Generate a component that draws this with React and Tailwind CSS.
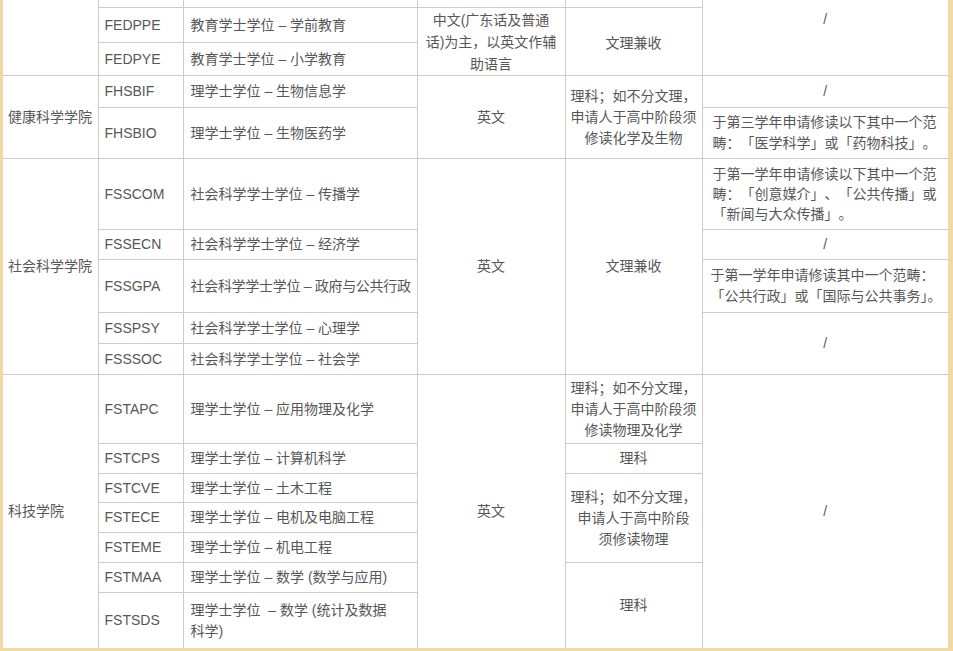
const td = "border border-[#cbcbcb] align-middle";
const codeCell = `${td} pl-[6px] text-left`;
const nameCell = `${td} pl-[7px] text-left`;
const midCell = `${td} text-center`;
// full-width punctuation, no trimming
const wide = "[text-spacing-trim:space-all]";

export default function App() {
  return (
    <div className="h-[651px] w-[953px] overflow-hidden bg-[#f2d8a3] pl-[3px] pr-[5px]">
      <div className="h-[648px] overflow-hidden bg-white">
        <table className="-mt-[38px] w-[945px] table-fixed border-collapse bg-white font-['Liberation_Sans','Noto_Sans_CJK_SC',sans-serif] text-[14px] leading-[21px] text-[#575757]">
          <colgroup>
            <col className="w-[95px]" />
            <col className="w-[85px]" />
            <col className="w-[234px]" />
            <col className="w-[148px]" />
            <col className="w-[137px]" />
            <col className="w-[246px]" />
          </colgroup>
          <tbody>
            <tr className="h-[45px]">
              <td className={`${td} border-t-0 border-l-0`} rowSpan={3}></td>
              <td className={td}></td>
              <td className={td}></td>
              <td className={td}></td>
              <td className={td}></td>
              <td className={`${midCell} border-r-0`} rowSpan={3}>/</td>
            </tr>
            <tr className="h-[35px]">
              <td className={codeCell}>FEDPPE</td>
              <td className={nameCell}>教育学士学位 – 学前教育</td>
              <td className={`${midCell} ${wide} leading-[22px]`} rowSpan={2}>
                中文(广东话及普通<br />话)为主，以英文作辅<br />助语言
              </td>
              <td className={`${midCell} pt-[3px]`} rowSpan={2}>文理兼收</td>
            </tr>
            <tr className="h-[33px]">
              <td className={codeCell}>FEDPYE</td>
              <td className={nameCell}>教育学士学位 – 小学教育</td>
            </tr>

            {/* 健康科学学院 */}
            <tr className="h-[32px]">
              <td className={`${td} border-l-0 pl-[5px]`} rowSpan={2}>健康科学学院</td>
              <td className={codeCell}>FHSBIF</td>
              <td className={nameCell}>理学士学位 – 生物信息学</td>
              <td className={midCell} rowSpan={2}>英文</td>
              <td className={`${midCell} ${wide}`} rowSpan={2}>
                理科；如不分文理，<br />申请人于高中阶段须<br />修读化学及生物
              </td>
              <td className={`${midCell} border-r-0`}>/</td>
            </tr>
            <tr className="h-[51px]">
              <td className={codeCell}>FHSBIO</td>
              <td className={nameCell}>理学士学位 – 生物医药学</td>
              <td className={`${td} ${wide} border-r-0 pl-[10px] text-left`}>
                于第三学年申请修读以下其中一个范<br />畴：「医学科学」或「药物科技」。
              </td>
            </tr>

            {/* 社会科学学院 */}
            <tr className="h-[71px]">
              <td className={`${td} border-l-0 pl-[5px]`} rowSpan={5}>社会科学学院</td>
              <td className={codeCell}>FSSCOM</td>
              <td className={nameCell}>社会科学学士学位 – 传播学</td>
              <td className={midCell} rowSpan={5}>英文</td>
              <td className={midCell} rowSpan={5}>文理兼收</td>
              <td className={`${td} ${wide} border-r-0 pl-[10px] text-left leading-[20px]`}>
                于第一学年申请修读以下其中一个范<br />畴：「创意媒介」、「公共传播」或<br />「新闻与大众传播」。
              </td>
            </tr>
            <tr className="h-[30px]">
              <td className={codeCell}>FSSECN</td>
              <td className={nameCell}>社会科学学士学位 – 经济学</td>
              <td className={`${midCell} border-r-0`}>/</td>
            </tr>
            <tr className="h-[53px]">
              <td className={codeCell}>FSSGPA</td>
              <td className={`${nameCell} tracking-[-0.3px]`}>社会科学学士学位 – 政府与公共行政</td>
              <td className={`${td} border-r-0 pl-[8px] text-left`}>
                于第一学年申请修读其中一个范畴：<br />「公共行政」或「国际与公共事务」。
              </td>
            </tr>
            <tr className="h-[31px]">
              <td className={codeCell}>FSSPSY</td>
              <td className={nameCell}>社会科学学士学位 – 心理学</td>
              <td className={`${midCell} border-r-0`} rowSpan={2}>/</td>
            </tr>
            <tr className="h-[31px]">
              <td className={codeCell}>FSSSOC</td>
              <td className={nameCell}>社会科学学士学位 – 社会学</td>
            </tr>

            {/* 科技学院 */}
            <tr className="h-[69px]">
              <td className={`${td} border-l-0 pl-[5px]`} rowSpan={7}>科技学院</td>
              <td className={codeCell}>FSTAPC</td>
              <td className={nameCell}>理学士学位 – 应用物理及化学</td>
              <td className={midCell} rowSpan={7}>英文</td>
              <td className={`${midCell} ${wide}`}>
                理科；如不分文理，<br />申请人于高中阶段须<br />修读物理及化学
              </td>
              <td className={`${midCell} border-r-0`} rowSpan={7}>/</td>
            </tr>
            <tr className="h-[30px]">
              <td className={codeCell}>FSTCPS</td>
              <td className={nameCell}>理学士学位 – 计算机科学</td>
              <td className={midCell}>理科</td>
            </tr>
            <tr className="h-[29px]">
              <td className={codeCell}>FSTCVE</td>
              <td className={nameCell}>理学士学位 – 土木工程</td>
              <td className={`${midCell} ${wide}`} rowSpan={3}>
                理科；如不分文理，<br />申请人于高中阶段<br />须修读物理
              </td>
            </tr>
            <tr className="h-[30px]">
              <td className={codeCell}>FSTECE</td>
              <td className={nameCell}>理学士学位 – 电机及电脑工程</td>
            </tr>
            <tr className="h-[30px]">
              <td className={codeCell}>FSTEME</td>
              <td className={nameCell}>理学士学位 – 机电工程</td>
            </tr>
            <tr className="h-[30px]">
              <td className={codeCell}>FSTMAA</td>
              <td className={nameCell}>理学士学位 – 数学 (数学与应用)</td>
              <td className={midCell} rowSpan={2}>理科</td>
            </tr>
            <tr className="h-[56px]">
              <td className={`${codeCell} border-b-0`}>FSTSDS</td>
              <td className={`${nameCell} border-b-0`}>
                理学士学位 &nbsp;– 数学 (统计及数据<br />科学)
              </td>
            </tr>
          </tbody>
        </table>
      </div>
    </div>
  );
}
